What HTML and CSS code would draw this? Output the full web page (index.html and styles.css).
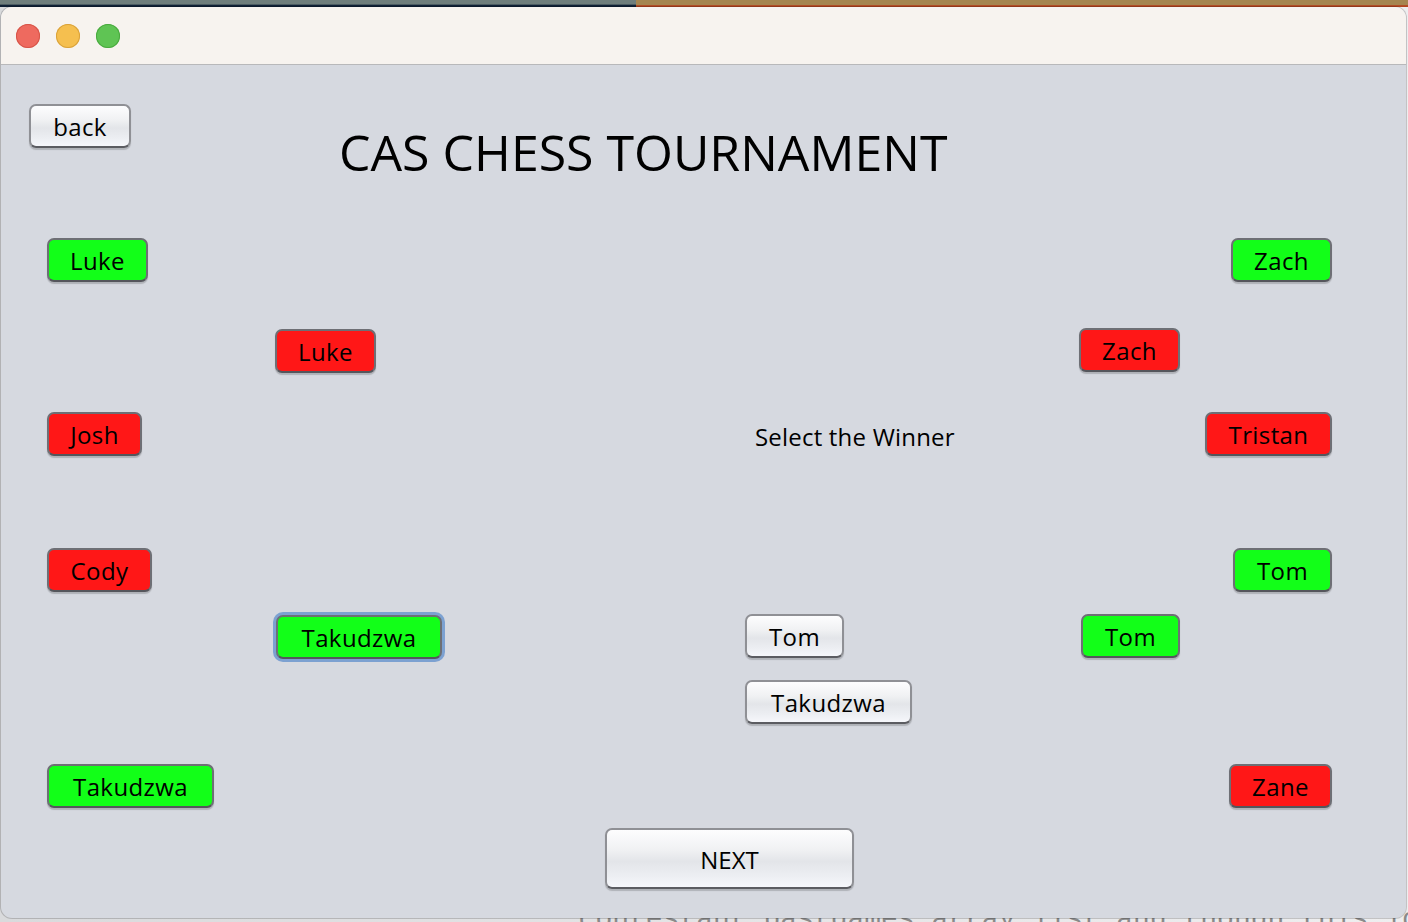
FILE: index.html
```html
<!DOCTYPE html>
<html lang="en">
<head>
<meta charset="utf-8">
<title>CAS Chess Tournament</title>
<link rel="stylesheet" href="styles.css">
</head>
<body>
<div class="desktop">
  <div class="backdrop">
    <div class="backdrop-left"></div>
    <div class="backdrop-right"></div>
  </div>
  <div class="window">
    <div class="titlebar">
      <span class="light light-close"></span>
      <span class="light light-min"></span>
      <span class="light light-max"></span>
    </div>
    <div class="canvas">
      <div class="header">
        <button class="btn btn-white btn-back">back</button>
        <h1 class="title">CAS CHESS TOURNAMENT</h1>
      </div>

      <button class="btn btn-green node n-luke1">Luke</button>
      <button class="btn btn-red node n-luke2">Luke</button>
      <button class="btn btn-red node n-josh">Josh</button>
      <button class="btn btn-red node n-cody">Cody</button>
      <button class="btn btn-green btn-focus node n-tak2">Takudzwa</button>
      <button class="btn btn-green node n-tak1">Takudzwa</button>

      <button class="btn btn-green node n-zach1">Zach</button>
      <button class="btn btn-red node n-zach2">Zach</button>
      <button class="btn btn-red node n-tristan">Tristan</button>
      <button class="btn btn-green node n-tom1">Tom</button>
      <button class="btn btn-green node n-tom2">Tom</button>
      <button class="btn btn-red node n-zane">Zane</button>

      <div class="label n-select">Select the Winner</div>
      <button class="btn btn-white node n-final-tom">Tom</button>
      <button class="btn btn-white node n-final-tak">Takudzwa</button>

      <button class="btn btn-white node n-next">NEXT</button>
    </div>
  </div>
  <div class="editor-strip">* contestant.pastgames array list and though this load</div>
</div>
</body>
</html>
```
FILE: styles.css
```css
* { box-sizing: border-box; }

html, body {
  margin: 0;
  padding: 0;
  width: 1408px;
  height: 922px;
  overflow: hidden;
}

body {
  background: #e9e9ea;
  font-family: "Open Sans", "Noto Sans", sans-serif;
  color: #000;
}

.desktop {
  position: relative;
  width: 1408px;
  height: 922px;
  background: linear-gradient(90deg, #d9dadc 0, #eeeeef 100%);
}

.backdrop {
  display: flex;
  height: 7px;
}

.backdrop-left {
  width: 636px;
  background: linear-gradient(180deg, #6f7e7c 0, #6f7e7c 60%, #0f2035 72%, #0f2035 100%);
}

.backdrop-right {
  flex: 1;
  background: linear-gradient(180deg, #a5854f 0, #a5854f 70%, #b3451f 80%, #b3451f 100%);
}

.window {
  margin-left: 1px;
  width: 1405px;
  height: 911px;
  border-radius: 11px;
  overflow: hidden;
  background: #d6d9e0;
  box-shadow: 0 0 0 1px rgba(0, 0, 0, 0.18);
  display: flex;
  flex-direction: column;
  position: relative;
  z-index: 1;
}

.titlebar {
  height: 58px;
  flex: none;
  background: #f7f3ef;
  border-bottom: 1px solid #b8b8ba;
  display: flex;
  align-items: center;
  padding-left: 15px;
  gap: 16px;
}

.light {
  width: 24px;
  height: 24px;
  border-radius: 50%;
  display: block;
  margin-top: 1px;
}

.light-close { background: #ee6a5f; box-shadow: inset 0 0 0 1px #d65549; }
.light-min { background: #f5bf4f; box-shadow: inset 0 0 0 1px #d9a23b; }
.light-max { background: #5fc454; box-shadow: inset 0 0 0 1px #4aa93f; }

.canvas {
  position: relative;
  flex: 1;
}

.header {
  display: flex;
  align-items: flex-start;
}

.title {
  margin: 62px 0 0 208px;
  font-weight: 400;
  font-size: 50px;
  line-height: 50px;
  letter-spacing: 0;
  color: #000;
}

.btn {
  font-family: "Open Sans", "Noto Sans", sans-serif;
  font-size: 24px;
  line-height: 24px;
  letter-spacing: 0.4px;
  color: #000;
  height: 44px;
  padding: 2px 0 0 0;
  border: 2px solid #6e6f75;
  border-bottom-color: #55565c;
  border-radius: 7px;
  box-shadow: 0 1.5px 1px rgba(0, 0, 0, 0.18);
  display: flex;
  align-items: center;
  justify-content: center;
  white-space: nowrap;
}

.btn-green { background: #12ff18; }
.btn-red { background: #ff1717; }

.btn-white {
  background: linear-gradient(180deg, #fdfdfe 0%, #f0f1f3 35%, #e3e5e9 55%, #eceef2 80%, #f6f7fb 100%);
  border-color: #8f9095;
  border-bottom-color: #5b5c61;
}

.btn-back {
  margin: 39px 0 0 28px;
  width: 102px;
  flex: none;
}

.btn-focus {
  box-shadow: 0 0 0 3px #7ca1d1, 0 1.5px 1px rgba(0, 0, 0, 0.18);
}

.node { position: absolute; }

.n-luke1 { left: 46px; top: 173px; width: 101px; }
.n-luke2 { left: 274px; top: 264px; width: 101px; }
.n-josh { left: 46px; top: 347px; width: 95px; }
.n-cody { left: 46px; top: 483px; width: 105px; }
.n-tak2 { left: 275px; top: 550px; width: 166px; height: 44px; }
.n-tak1 { left: 46px; top: 699px; width: 167px; }

.n-zach1 { left: 1230px; top: 173px; width: 101px; }
.n-zach2 { left: 1078px; top: 263px; width: 101px; }
.n-tristan { left: 1204px; top: 347px; width: 127px; }
.n-tom1 { left: 1232px; top: 483px; width: 99px; }
.n-tom2 { left: 1080px; top: 549px; width: 99px; }
.n-zane { left: 1228px; top: 699px; width: 103px; }

.n-final-tom { left: 744px; top: 549px; width: 99px; }
.n-final-tak { left: 744px; top: 615px; width: 167px; }

.n-next {
  left: 604px;
  top: 763px;
  width: 249px;
  height: 61px;
  letter-spacing: 0;
}

.label {
  position: absolute;
  font-size: 24px;
  line-height: 24px;
  letter-spacing: 0.2px;
  white-space: nowrap;
}

.n-select { left: 754px; top: 360px; }

.editor-strip {
  position: absolute;
  left: 545px;
  top: 906px;
  font-family: "Liberation Mono", monospace;
  font-size: 28px;
  line-height: 28px;
  color: #8a8a8a;
  white-space: nowrap;
  z-index: 0;
}
```
